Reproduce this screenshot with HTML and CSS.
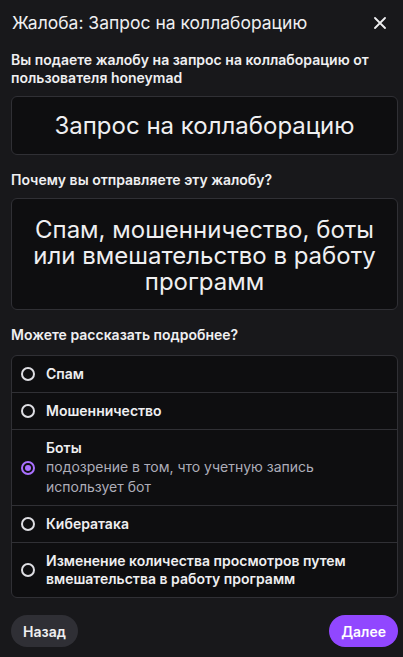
FILE: index.html
```html
<!DOCTYPE html>
<html lang="ru">
<head>
<meta charset="utf-8">
<link rel="stylesheet" href="styles.css">
</head>
<body>
<div class="dialog">
  <div class="header">
    <h1 class="title">Жалоба: Запрос на коллаборацию</h1>
    <button class="close" aria-label="Закрыть">
      <svg width="12" height="12" viewBox="0 0 12 12"><path d="M1 1L11 11M11 1L1 11" stroke="#efeff1" stroke-width="1.8" stroke-linecap="round"/></svg>
    </button>
  </div>
  <p class="label first">Вы подаете жалобу на запрос на коллаборацию от пользователя honeymad</p>
  <div class="box box-single">Запрос на коллаборацию</div>
  <p class="label">Почему вы отправляете эту жалобу?</p>
  <div class="box box-multi">Спам, мошенничество, боты или вмешательство в работу программ</div>
  <p class="label">Можете рассказать подробнее?</p>
  <div class="options">
    <div class="option"><span class="radio"></span><div class="opt-text"><div class="opt-title">Спам</div></div></div>
    <div class="option"><span class="radio"></span><div class="opt-text"><div class="opt-title">Мошенничество</div></div></div>
    <div class="option"><span class="radio checked"></span><div class="opt-text"><div class="opt-title">Боты</div><div class="opt-desc">подозрение в том, что учетную запись использует бот</div></div></div>
    <div class="option"><span class="radio"></span><div class="opt-text"><div class="opt-title">Кибератака</div></div></div>
    <div class="option"><span class="radio"></span><div class="opt-text"><div class="opt-title">Изменение количества просмотров путем вмешательства в работу программ</div></div></div>
  </div>
  <div class="footer">
    <button class="btn btn-secondary">Назад</button>
    <button class="btn btn-primary">Далее</button>
  </div>
</div>
</body>
</html>
```
FILE: styles.css
```css
* { box-sizing: border-box; }
html, body {
  margin: 0;
  padding: 0;
  background: #18181b;
  color: #efeff1;
  font-family: Inter, "Noto Sans", sans-serif;
}
.dialog {
  width: 403px;
  height: 657px;
  padding: 11px 5px 0 11px;
  display: flex;
  flex-direction: column;
}
.header {
  display: flex;
  align-items: center;
  justify-content: space-between;
  height: 24px;
}
.title {
  margin: 0 0 0 1px;
  font-size: 17.5px;
  font-weight: 400;
  line-height: 24px;
}
.close {
  width: 30px;
  height: 30px;
  margin-right: 3px;
  background: none;
  border: 0;
  padding: 0;
  display: flex;
  align-items: center;
  justify-content: center;
}
.label {
  margin: 0;
  font-size: 14px;
  font-weight: 600;
  line-height: 18px;
  padding-top: 16px;
  padding-bottom: 9px;
}
.label.first {
  padding-top: 16px;
  padding-bottom: 9px;
}
.box {
  background: #0e0e10;
  border: 1px solid #303035;
  border-radius: 6px;
  font-size: 24px;
  text-align: center;
  display: flex;
  align-items: center;
  justify-content: center;
  padding: 0 20px;
}
.box-single {
  height: 59px;
  line-height: 30px;
}
.box-multi {
  height: 112px;
  line-height: 26px;
  padding-top: 4px;
}
.options {
  margin-top: 2px;
  background: #0e0e10;
  border: 1px solid #303035;
  border-radius: 6px;
}
.option {
  display: flex;
  align-items: center;
  gap: 11px;
  padding: 9px 10px 9px 9px;
  border-bottom: 1px solid #303035;
}
.option:last-child { border-bottom: 0; }
.radio {
  flex: none;
  width: 14px;
  height: 14px;
  border: 2px solid #dedee3;
  border-radius: 50%;
  position: relative;
}
.radio.checked {
  border-color: #a970ff;
}
.radio.checked::after {
  content: "";
  position: absolute;
  left: 2px;
  top: 2px;
  width: 6px;
  height: 6px;
  border-radius: 50%;
  background: #a970ff;
}
.opt-title {
  font-size: 14px;
  font-weight: 600;
  line-height: 18px;
}
.opt-desc {
  font-size: 14px;
  line-height: 19.5px;
  color: #adadb8;
}
.footer {
  display: flex;
  justify-content: space-between;
  margin-top: 17px;
}
.btn {
  height: 32px;
  border: 0;
  border-radius: 16px;
  padding: 0 12px;
  font-family: Inter, "Noto Sans", sans-serif;
  font-size: 14px;
  font-weight: 600;
  color: #efeff1;
}
.btn-secondary { background: #2f2f35; }
.btn-primary { background: #9147ff; color: #fff; }
```
